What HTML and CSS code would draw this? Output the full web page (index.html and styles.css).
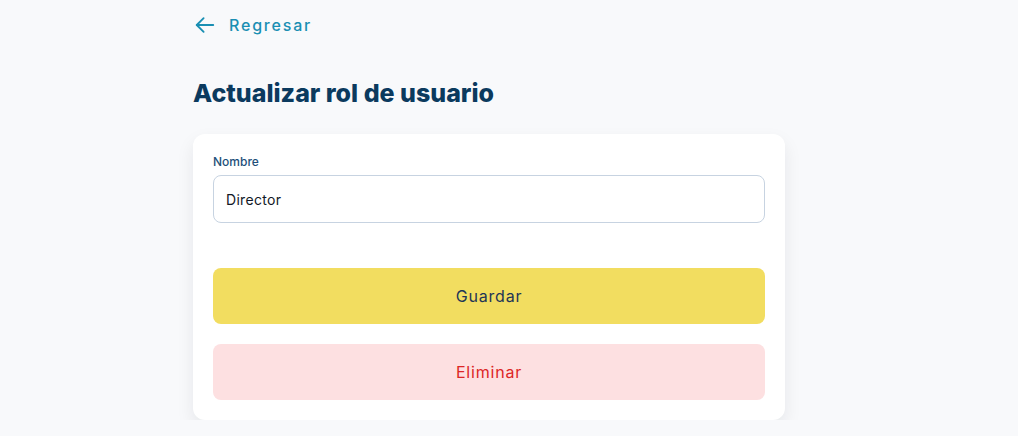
FILE: index.html
```html
<!DOCTYPE html>
<html lang="es">
<head>
<meta charset="utf-8">
<title>Actualizar rol de usuario</title>
<link rel="stylesheet" href="styles.css">
</head>
<body>
<main class="page">
  <a class="back" href="#">
    <svg class="back-icon" width="22" height="22" viewBox="0 0 24 24" fill="none" stroke="currentColor" stroke-width="2" stroke-linecap="round" stroke-linejoin="round"><path d="M21 12H3"/><path d="M10.5 4.5L3 12l7.5 7.5"/></svg>
    <span>Regresar</span>
  </a>
  <h1 class="title">Actualizar rol de usuario</h1>
  <section class="card">
    <label class="field">
      <span class="label">Nombre</span>
      <input class="input" type="text" value="Director">
    </label>
    <div class="actions">
      <button class="btn btn-save" type="button">Guardar</button>
      <button class="btn btn-delete" type="button">Eliminar</button>
    </div>
  </section>
</main>
</body>
</html>
```

FILE: styles.css
```css
* { box-sizing: border-box; }
html, body { margin: 0; }
body {
  background: #f8f9fb;
  font-family: "Inter", "Noto Sans", sans-serif;
  color: #0b3a5e;
}
.page {
  width: 592px;
  margin-left: 193px;
  padding-top: 14px;
}
.back {
  display: flex;
  align-items: center;
  gap: 13px;
  color: #1a8fb3;
  text-decoration: none;
  font-size: 16px;
  font-weight: 500;
  letter-spacing: 1.8px;
  padding-left: 1px;
  height: 22px;
}
.back-icon { display: block; }
.title {
  margin: 41px 0 0;
  font-size: 25px;
  line-height: 32px;
  font-weight: 800;
  color: #0b3a5e;
  letter-spacing: 0;
}
.card {
  margin-top: 25px;
  background: #fff;
  border-radius: 12px;
  padding: 19px 20px 20px;
  box-shadow: 0 8px 18px rgba(15, 23, 42, 0.08);
}
.field { display: flex; flex-direction: column; gap: 5px; }
.label {
  font-size: 12px;
  line-height: 17px;
  color: #1d4f7a;
  font-weight: 500;
}
.input {
  height: 48px;
  border: 1px solid #c7d3e1;
  border-radius: 8px;
  padding: 0 12px;
  font: inherit;
  font-size: 14px;
  letter-spacing: 0.3px;
  color: #111827;
  background: #fff;
}
.actions {
  margin-top: 45px;
  display: flex;
  flex-direction: column;
  gap: 20px;
}
.btn {
  height: 56px;
  border: 0;
  border-radius: 8px;
  font: inherit;
  font-size: 16px;
  letter-spacing: 0.8px;
  cursor: pointer;
}
.btn-save { background: #f2dd60; color: #1e3556; }
.btn-delete { background: #fde0e1; color: #dc2626; }
```
